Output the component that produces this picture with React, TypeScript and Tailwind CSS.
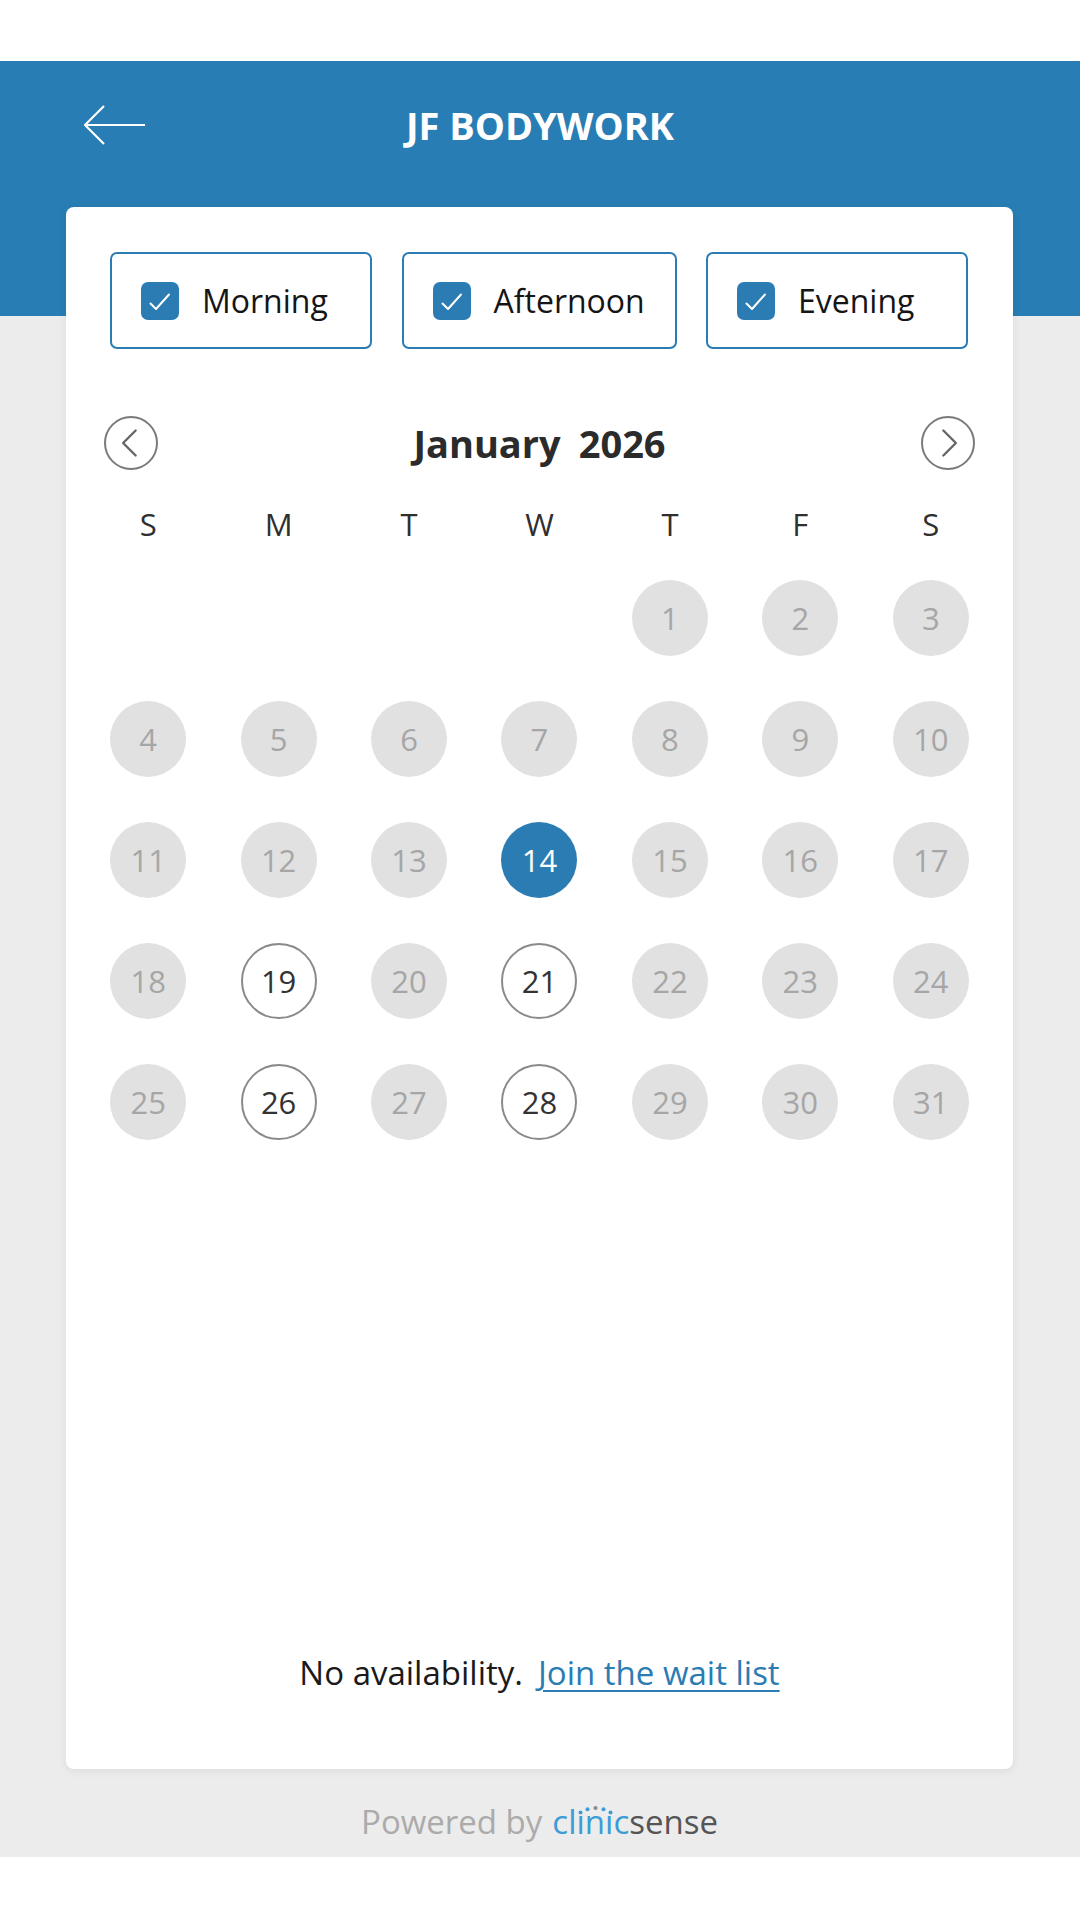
import React from 'react';

type DayState = 'off' | 'open' | 'selected';

const OPEN_DAYS = [19, 21, 26, 28];
const SELECTED_DAY = 14;
const FIRST_WEEKDAY = 4; // Jan 1, 2026 is a Thursday
const WEEKDAYS = ['S', 'M', 'T', 'W', 'T', 'F', 'S'];

const dayClass: Record<DayState, string> = {
  off: 'bg-[#e1e1e1] text-[#a6a6a6]',
  open: 'bg-white border-2 border-[#8a8a8a] text-[#333333]',
  selected: 'bg-[#2a7cb3] text-white',
};

const ArrowLeft = () => (
  <svg width="62" height="40" viewBox="0 0 62 40" fill="none">
    <path d="M1 20 H61 M20 1 L1 20 L20 39" stroke="white" strokeWidth="2.2" />
  </svg>
);

const CheckBox: React.FC<{ label: string; width: string }> = ({ label, width }) => (
  <div
    className={`${width} h-[97px] flex items-center pl-[29px] gap-[23px] border-2 border-[#2a7cb3] rounded-[7px] bg-white`}
  >
    <div className="w-[38px] h-[38px] rounded-[7px] bg-[#2a7cb3] shrink-0">
      <svg width="38" height="38" viewBox="0 0 38 38" fill="none">
        <path d="M9.5 21.5 L15 27 L28 12.5" stroke="white" strokeWidth="2" strokeLinecap="round" strokeLinejoin="round" />
      </svg>
    </div>
    <span className="text-[32px] leading-[40px] text-[#151515]">{label}</span>
  </div>
);

const NavButton: React.FC<{ dir: 'prev' | 'next' }> = ({ dir }) => (
  <button className="w-[54px] h-[54px] rounded-full border-2 border-[#7a7a7a] flex items-center justify-center">
    <svg width="54" height="54" viewBox="0 0 54 54" fill="none">
      <path
        d={dir === 'prev' ? 'M32 13.5 L18.5 27 L32 40.5' : 'M22 13.5 L35.5 27 L22 40.5'}
        stroke="#666666"
        strokeWidth="2.6"
        strokeLinecap="round"
        strokeLinejoin="round"
      />
    </svg>
  </button>
);

const ClinicSenseLogo = () => (
  <span className="relative inline-block">
    <span className="text-[#3d9bd6]">cl&#305;n&#305;c</span>
    <span className="text-[#555555]">sense</span>
    <svg className="absolute left-0 top-0" width="66" height="22" viewBox="0 0 66 22">
      <circle cx="28.5" cy="11.5" r="2" fill="#3d9bd6" />
      <circle cx="35.5" cy="8.2" r="2" fill="#3d9bd6" />
      <circle cx="43.5" cy="7" r="2" fill="#8a8a8a" />
      <circle cx="51.5" cy="8.2" r="2" fill="#3d9bd6" />
      <circle cx="58.5" cy="11.5" r="2" fill="#3d9bd6" />
    </svg>
  </span>
);

export default function App() {
  const cells: (number | null)[] = [
    ...Array.from({ length: FIRST_WEEKDAY }, () => null),
    ...Array.from({ length: 31 }, (_, i) => i + 1),
  ];

  const stateOf = (d: number): DayState =>
    d === SELECTED_DAY ? 'selected' : OPEN_DAYS.includes(d) ? 'open' : 'off';

  return (
    <div className="min-h-[1920px] bg-white font-['Open_Sans',sans-serif]">
      <div className="h-[61px]" />

      {/* Header */}
      <header className="h-[255px] bg-[#287db4] pt-[29px]">
        <div className="grid grid-cols-[1fr_auto_1fr] items-center h-[70px] px-[84px]">
          <ArrowLeft />
          <h1 className="text-[38px] leading-[50px] font-bold text-white">JF BODYWORK</h1>
          <div />
        </div>
      </header>

      <main className="bg-[#ececec] h-[1541px] pl-[66px] pr-[67px] flex flex-col">
        {/* Card */}
        <div className="-mt-[109px] h-[1562px] shrink-0 bg-white rounded-[8px] shadow-[0_2px_10px_rgba(0,0,0,0.07)] flex flex-col">
          {/* Time of day filters */}
          <div className="flex gap-x-[29.5px] pt-[45px] pl-[44px]">
            <CheckBox label="Morning" width="w-[262px]" />
            <CheckBox label="Afternoon" width="w-[275px]" />
            <CheckBox label="Evening" width="w-[262px]" />
          </div>

          {/* Month navigation */}
          <div className="mt-[67px] h-[54px] px-[38px] flex items-center justify-between">
            <NavButton dir="prev" />
            <div className="text-[38px] leading-[52px] font-bold text-[#2b2b2b] flex gap-[18px]">
              <span>January</span>
              <span>2026</span>
            </div>
            <NavButton dir="next" />
          </div>

          {/* Weekdays */}
          <div className="mt-[31px] mx-[17px] grid grid-cols-7 h-[40px]">
            {WEEKDAYS.map((w, i) => (
              <div key={i} className="flex items-center justify-center text-[31px] text-[#2f2f2f]">
                {w}
              </div>
            ))}
          </div>

          {/* Days */}
          <div className="mt-[39px] mx-[17px] grid grid-cols-7 gap-y-[45px]">
            {cells.map((d, i) => (
              <div key={i} className="flex justify-center h-[76px]">
                {d !== null && (
                  <div
                    className={`w-[76px] h-[76px] rounded-full flex items-center justify-center text-[31px] ${dayClass[stateOf(d)]}`}
                  >
                    {d}
                  </div>
                )}
              </div>
            ))}
          </div>

          {/* Availability */}
          <div className="mt-auto pb-[74px] h-[118px] flex items-center justify-center text-[33px] leading-[44px]">
            <span className="text-[#1a1a1a]">No availability.</span>
            <a href="#" className="ml-[15px] text-[#2a7cb3] underline underline-offset-[5px] decoration-2">
              Join the wait list
            </a>
          </div>
        </div>

        {/* Footer */}
        <div className="h-[88px] shrink-0 pt-[32px] flex justify-center text-[33px] leading-[42px]">
          <span className="text-[#ababab] mr-[10px]">Powered by</span>
          <ClinicSenseLogo />
        </div>
      </main>
    </div>
  );
}
